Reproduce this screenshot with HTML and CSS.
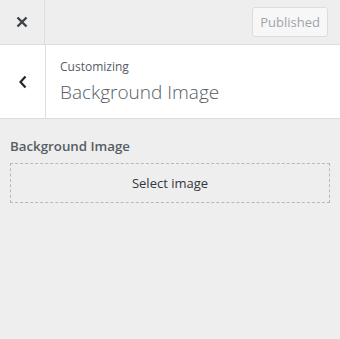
FILE: index.html
```html
<!DOCTYPE html>
<html>
<head>
  <title>Customizer</title>
  <meta name="viewport" content="width=device-width, initial-scale=1.0">
  <link rel="stylesheet" href="styles.css">
</head>
<body>
  <div class="header">
    <button class="close-button">
      <svg width="14" height="14" viewBox="0 0 14 14"><path d="M2.5 2.5l9 9M11.5 2.5l-9 9" stroke="#3c434a" stroke-width="2.4" fill="none"/></svg>
    </button>
    <div class="header-actions">
      <button class="publish-button" disabled>Published</button>
    </div>
  </div>

  <div class="section-head">
    <button class="back-button">
      <svg width="10" height="16" viewBox="0 0 10 16"><path d="M7.5 2.5L2.5 8l5 5.5" stroke="#23282d" stroke-width="2.2" fill="none"/></svg>
    </button>
    <div class="section-title">
      <span class="customizing">Customizing</span>
      <h2>Background Image</h2>
    </div>
  </div>

  <div class="control">
    <span class="control-title">Background Image</span>
    <button class="select-image">Select image</button>
  </div>
</body>
</html>
```

FILE: styles.css
```css
body {
  margin: 0;
  background-color: #eeeeee;
  font-family: 'Open Sans', 'Noto Sans', sans-serif;
  color: #555d66;
}

button {
  font-family: inherit;
  cursor: pointer;
}

.header {
  display: flex;
  height: 44px;
  border-bottom: 1px solid #dddddd;
  background-color: #eeeeee;
}

.close-button {
  width: 45px;
  height: 44px;
  padding: 0;
  border: none;
  border-right: 1px solid #dddddd;
  background: transparent;
  display: flex;
  align-items: center;
  justify-content: center;
}

.header-actions {
  flex: 1;
  display: flex;
  align-items: center;
  justify-content: flex-end;
  padding-right: 12px;
}

.publish-button {
  height: 30px;
  padding: 0 7px;
  font-size: 13px;
  color: #a0a5aa;
  background-color: #f7f7f7;
  border: 1px solid #dddddd;
  border-radius: 3px;
}

.section-head {
  display: flex;
  background-color: #ffffff;
  border-bottom: 1px solid #dddddd;
  height: 73px;
}

.back-button {
  width: 46px;
  padding: 0;
  border: none;
  border-right: 1px solid #dddddd;
  background: transparent;
  display: flex;
  align-items: center;
  justify-content: center;
}

.section-title {
  padding: 14px 14px 0 14px;
}

.customizing {
  display: block;
  font-size: 12px;
  line-height: 16px;
  color: #555d66;
}

.section-title h2 {
  margin: 4px 0 0 0;
  font-size: 19px;
  font-weight: 300;
  line-height: 26px;
  color: #555d66;
}

.control {
  padding: 16px 10px 0 10px;
}

.control-title {
  display: block;
  font-size: 13.3px;
  font-weight: 600;
  line-height: 22px;
  margin-bottom: 6px;
}

.select-image {
  display: block;
  width: 100%;
  height: 40px;
  font-size: 13px;
  color: #32373c;
  background-color: #eeeeee;
  border: 1px dashed #b4b9be;
}
```
